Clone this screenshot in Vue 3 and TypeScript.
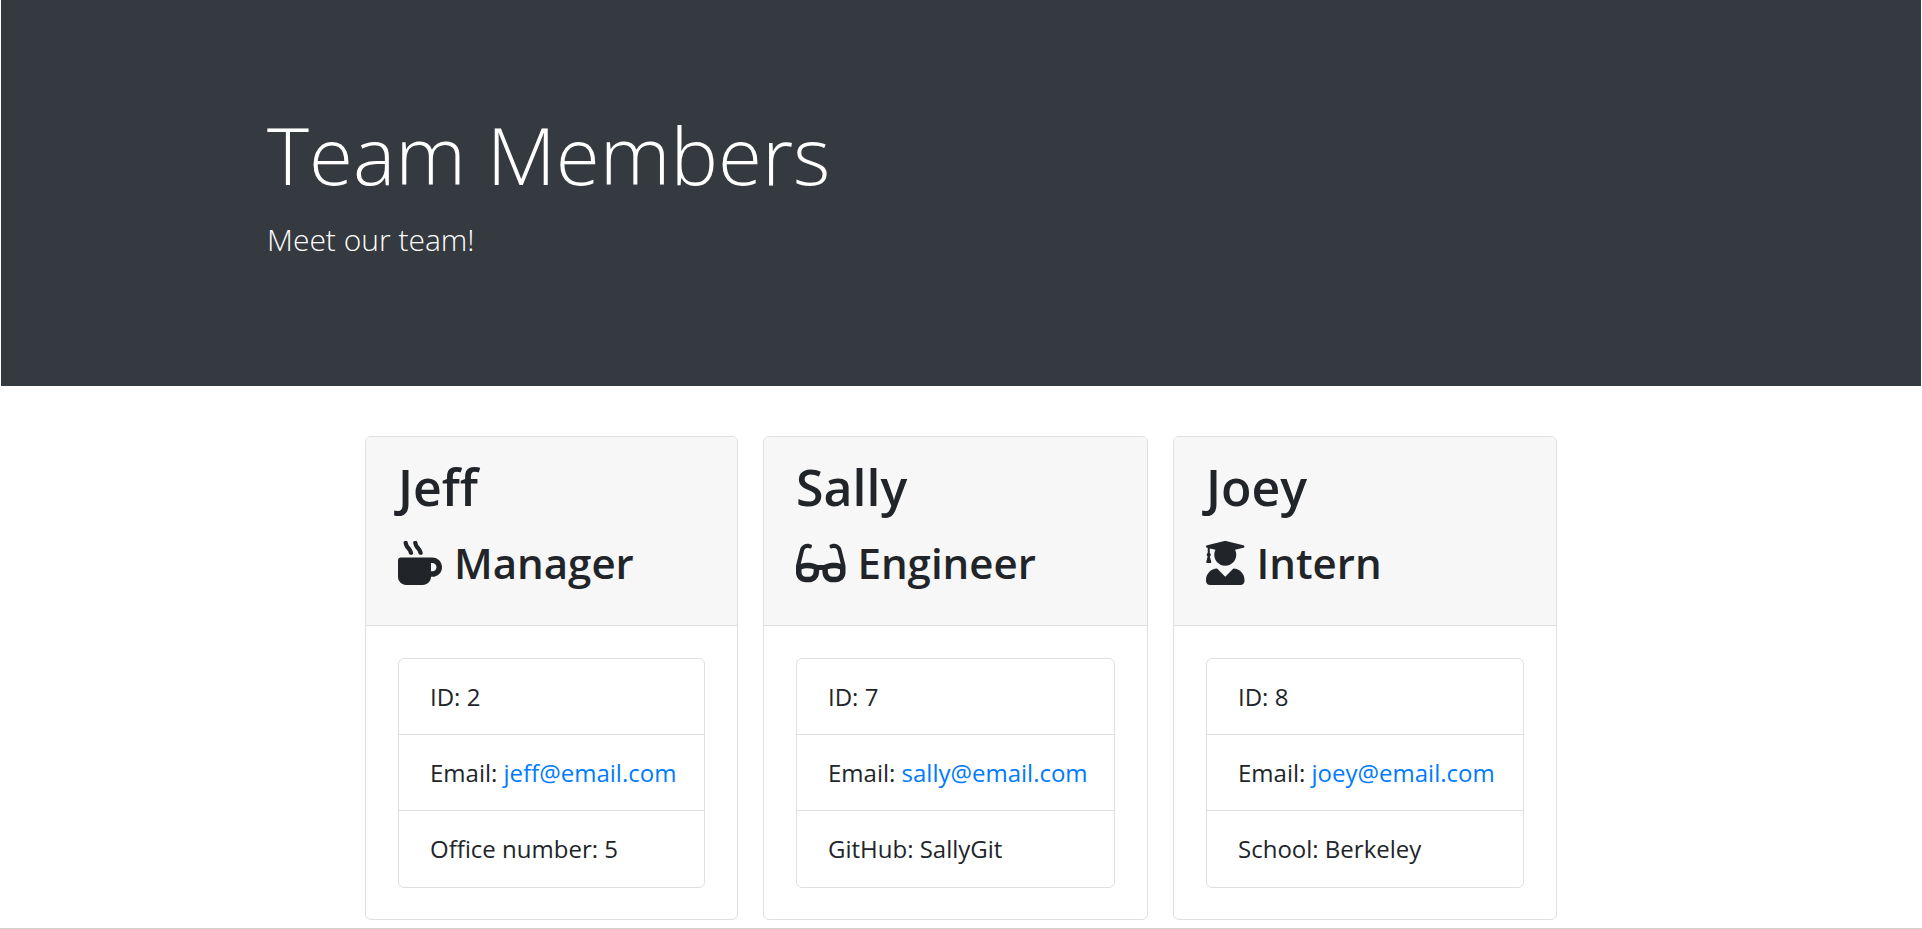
<script setup lang="ts">
interface Icon {
  width: number
  path: string
}

interface Member {
  name: string
  role: string
  icon: Icon
  id: number
  email: string
  detailLabel: string
  detail: string
}

const mug: Icon = {
  width: 512,
  path: 'M127.1 146.5c1.3 7.7 8 13.5 16 13.5h16.5c9.8 0 17.6-8.5 16.3-18-3.8-28.2-16.4-54.2-36.6-74.7-14.4-14.7-23.6-33.3-26.4-53.5C111.8 5.9 105 0 96.8 0H80.4C70.6 0 63 8.5 64.1 18c3.9 31.9 18 61.3 40.6 84.4 12 12.2 19.7 27.5 22.4 44.1zm112 0c1.3 7.7 8 13.5 16 13.5h16.5c9.8 0 17.6-8.5 16.3-18-3.8-28.2-16.4-54.2-36.6-74.7-14.4-14.7-23.6-33.3-26.4-53.5C223.8 5.9 217 0 208.8 0h-16.4c-9.8 0-17.5 8.5-16.3 18 3.9 31.9 18 61.3 40.6 84.4 12 12.2 19.7 27.5 22.4 44.1zM400 192H32c-17.7 0-32 14.3-32 32v192c0 53 43 96 96 96h192c53 0 96-43 96-96h16c61.8 0 112-50.2 112-112s-50.2-112-112-112zm0 160h-16v-96h16c26.5 0 48 21.5 48 48s-21.5 48-48 48z',
}

const glasses: Icon = {
  width: 576,
  path: 'M574.1 280.37L528.75 98.66c-5.91-23.7-21.59-44.05-43-55.81-21.44-11.73-46.97-14.11-70.19-6.33l-15.25 5.08c-8.39 2.79-12.92 11.86-10.12 20.24l5.06 15.18c2.79 8.38 11.85 12.91 20.23 10.12l13.18-4.39c10.87-3.62 23-3.57 33.16 1.73 10.29 5.37 17.57 14.56 20.37 25.82l38.46 153.82c-22.19-6.81-49.79-12.46-81.2-12.46-34.77 0-73.98 7.02-114.85 26.74h-73.18c-40.87-19.74-80.08-26.75-114.86-26.75-31.42 0-59.02 5.65-81.21 12.46l38.46-153.83c2.79-11.25 10.09-20.45 20.38-25.81 10.16-5.3 22.28-5.35 33.15-1.73l13.17 4.39c8.38 2.79 17.44-1.74 20.23-10.12l5.06-15.18c2.8-8.38-1.73-17.45-10.12-20.24l-15.25-5.08c-23.22-7.78-48.75-5.41-70.19 6.33-21.41 11.77-37.09 32.11-43 55.8L1.9 280.37A64.218 64.218 0 0 0 0 295.86v70.25C0 429.01 51.58 480 115.2 480h37.12c60.28 0 110.37-45.94 114.88-105.37l2.93-38.63h35.75l2.93 38.63C313.31 434.06 363.4 480 423.68 480h37.12c63.62 0 115.2-50.99 115.2-113.88v-70.25c0-5.23-.64-10.43-1.9-15.5zm-370.72 89.42c-1.97 25.91-24.4 46.21-51.06 46.21H115.2C86.97 416 64 393.62 64 366.11v-37.54c18.12-6.49 43.42-12.92 72.58-12.92 23.86 0 47.26 4.33 69.93 12.92l-3.13 41.22zM512 366.12c0 27.51-22.97 49.88-51.2 49.88h-37.12c-26.67 0-49.1-20.3-51.06-46.21l-3.13-41.22c22.67-8.59 46.08-12.92 69.95-12.92 29.17 0 54.44 6.42 72.56 12.92v37.55z',
}

const graduate: Icon = {
  width: 448,
  path: 'M319.4 320.6L224 416l-95.4-95.4C57.1 323.7 0 382.2 0 454.4v9.6c0 26.5 21.5 48 48 48h352c26.5 0 48-21.5 48-48v-9.6c0-72.2-57.1-130.7-128.6-133.8zM13.6 79.8l6.4 1.5v58.4c-7 4.2-12 11.5-12 20.3 0 8.4 4.6 15.4 11.1 19.7L3.5 242c-1.7 6.9 2.1 14 7.6 14h41.8c5.5 0 9.3-7.1 7.6-14l-15.6-62.3C51.4 175.4 56 168.4 56 160c0-8.8-5-16.1-12-20.3V87.1l66 15.9c-8.6 17.2-14 36.4-14 57 0 70.7 57.3 128 128 128s128-57.3 128-128c0-20.6-5.3-39.8-14-57l96.3-23.2c18.2-4.4 18.2-27.1 0-31.5l-190.4-46c-13-3.1-26.7-3.1-39.7 0L13.6 48.2c-18.1 4.4-18.1 27.2 0 31.6z',
}

const members: Member[] = [
  { name: 'Jeff', role: 'Manager', icon: mug, id: 2, email: 'jeff@email.com', detailLabel: 'Office number', detail: '5' },
  { name: 'Sally', role: 'Engineer', icon: glasses, id: 7, email: 'sally@email.com', detailLabel: 'GitHub', detail: 'SallyGit' },
  { name: 'Joey', role: 'Intern', icon: graduate, id: 8, email: 'joey@email.com', detailLabel: 'School', detail: 'Berkeley' },
]
</script>

<template>
  <div class="page">
    <header class="hero">
      <div class="hero-inner">
        <h1>Team Members</h1>
        <p>Meet our team!</p>
      </div>
    </header>
    <main class="team">
      <article v-for="member in members" :key="member.id" class="card">
        <div class="card-header">
          <h2>{{ member.name }}</h2>
          <h3>
            <svg class="icon" :viewBox="`0 0 ${member.icon.width} 512`" aria-hidden="true">
              <path :d="member.icon.path" />
            </svg>
            <span>{{ member.role }}</span>
          </h3>
        </div>
        <div class="card-body">
          <ul>
            <li>ID: {{ member.id }}</li>
            <li>Email: <a :href="`mailto:${member.email}`">{{ member.email }}</a></li>
            <li>{{ member.detailLabel }}: {{ member.detail }}</li>
          </ul>
        </div>
      </article>
    </main>
  </div>
</template>

<style>
body {
  background: #fff;
}
</style>

<style scoped>
.page {
  box-sizing: border-box;
  min-height: 100vh;
  padding: 0 1px;
  border-bottom: 1px solid #d0d0cc;
  color: #212529;
  font-family: "Segoe UI", "Open Sans", "Noto Sans", sans-serif;
  font-size: 24px;
  line-height: 38px;
}

.hero {
  padding: 100px 24px;
  background: #343a40;
  color: #fff;
}

.hero-inner {
  max-width: 1388px;
  margin: 0 auto;
}

h1,
h2,
h3,
p,
ul {
  margin: 0;
}

h1 {
  margin-bottom: 10px;
  font-size: 80px;
  font-weight: 300;
  line-height: 108px;
}

p {
  font-size: 30px;
  font-weight: 300;
  line-height: 44px;
  padding-bottom: 24px;
}

.team {
  display: grid;
  grid-template-columns: 373fr 385fr 384fr;
  gap: 25px;
  max-width: 1192px;
  margin: 0 auto;
  padding: 50px 0 8px;
}

.card {
  overflow: hidden;
  border: 1px solid #dfdfdf;
  border-radius: 6px;
  background: #fff;
}

.card-header {
  padding: 20px 32px 30px;
  border-bottom: 1px solid #dfdfdf;
  background: #f7f7f7;
}

h2 {
  margin-bottom: 14px;
  font-size: 50px;
  font-weight: 600;
  line-height: 60px;
}

h3 {
  display: flex;
  align-items: center;
  gap: 12px;
  font-size: 42px;
  font-weight: 600;
  line-height: 64px;
}

.icon {
  flex: none;
  height: 44px;
  fill: currentColor;
}

.card-body {
  padding: 32px 32px 31px;
}

ul {
  padding: 0;
  border: 1px solid #dfdfdf;
  border-radius: 6px;
  list-style: none;
}

li {
  padding: 19px 31px 18px;
  white-space: nowrap;
}

li:last-child {
  padding-bottom: 19px;
}

li + li {
  border-top: 1px solid #dfdfdf;
}

a {
  color: #007bff;
  text-decoration: none;
}
</style>
